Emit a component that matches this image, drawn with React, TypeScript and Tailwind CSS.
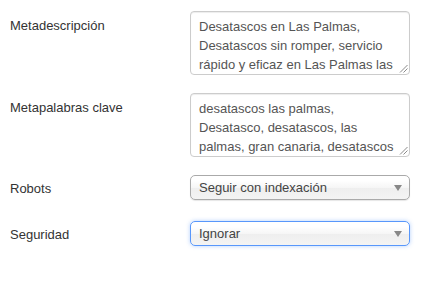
import React from "react";

const font = { fontFamily: '"Liberation Sans", Arial, sans-serif' };

function Grip() {
  return (
    <svg className="absolute right-[1px] bottom-[1px]" width="9" height="9" viewBox="0 0 9 9">
      <line x1="8.5" y1="1" x2="1" y2="8.5" stroke="#8a8a8a" strokeWidth="1" />
      <line x1="8.5" y1="4.5" x2="4.5" y2="8.5" stroke="#8a8a8a" strokeWidth="1" />
    </svg>
  );
}

function Area({ lines }: { lines: string[] }) {
  return (
    <div className="relative w-[220px] h-[64px] border border-[#cccccc] rounded-[4px] bg-white shadow-[inset_0_1px_1px_rgba(0,0,0,0.075)]">
      <div className="h-full overflow-hidden px-[8px] pt-[5px] text-[13px] leading-[19px] text-[#555555]">
        {lines.map((l, i) => (
          <div key={i} className="whitespace-nowrap">{l}</div>
        ))}
      </div>
      <Grip />
    </div>
  );
}

function Select({ value, focused }: { value: string; focused?: boolean }) {
  return (
    <div
      className={
        "relative w-[220px] h-[25px] rounded-[5px] border flex items-center pl-[8px] text-[13px] text-[#444444] bg-[linear-gradient(#ffffff_20%,#f6f6f6_50%,#eeeeee_52%,#f4f4f4_100%)] " +
        (focused
          ? "border-[#5897fb] shadow-[0_0_4px_rgba(88,151,251,0.45)]"
          : "border-[#aaaaaa] shadow-[0_1px_1px_rgba(0,0,0,0.1)]")
      }
    >
      <span>{value}</span>
      <svg className="absolute right-[7px] top-[9px]" width="8" height="6" viewBox="0 0 8 6">
        <polygon points="0,0 8,0 4,6" fill="#888888" />
      </svg>
    </div>
  );
}

function Row({ label, children, mb, pt }: { label: string; children: React.ReactNode; mb: string; pt: string }) {
  return (
    <div className={"flex " + mb}>
      <div className={"w-[190px] shrink-0 pl-[10px] text-[13px] leading-[18px] text-[#333333] " + pt}>{label}</div>
      <div>{children}</div>
    </div>
  );
}

export default function App() {
  return (
    <div className="w-[437px] h-[282px] bg-white pt-[11px]" style={font}>
      <Row label="Metadescripción" mb="mb-[18px]" pt="pt-[6px]">
        <Area
          lines={[
            "Desatascos en Las Palmas,",
            "Desatascos sin romper, servicio",
            "rápido y eficaz en Las Palmas las",
            "24 horas.",
          ]}
        />
      </Row>
      <Row label="Metapalabras clave" mb="mb-[18px]" pt="pt-[6px]">
        <Area
          lines={[
            "desatascos las palmas,",
            "Desatasco, desatascos, las",
            "palmas, gran canaria, desatascos",
            "las palmas, desatascos en las",
          ]}
        />
      </Row>
      <Row label="Robots" mb="mb-[21px]" pt="pt-[5px]">
        <Select value="Seguir con indexación" />
      </Row>
      <Row label="Seguridad" mb="mb-0" pt="pt-[5px]">
        <Select value="Ignorar" focused />
      </Row>
    </div>
  );
}
